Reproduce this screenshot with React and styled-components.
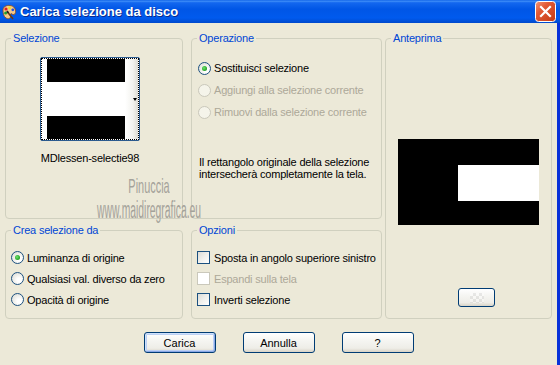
import React from "react";
import styled, { createGlobalStyle } from "styled-components";

const GlobalStyle = createGlobalStyle`
  html, body {
    margin: 0;
    padding: 0;
    background: #ece9d8;
  }
  body {
    font-family: "Liberation Sans", Arial, sans-serif;
    font-size: 11px;
    color: #000;
  }
`;

const Window = styled.div`
  width: 560px;
  height: 365px;
  display: flex;
  flex-direction: column;
  overflow: hidden;
  background: #ece9d8;
`;

const TitleBar = styled.div`
  height: 23px;
  flex: none;
  display: flex;
  align-items: center;
  padding: 0 4px 0 1px;
  box-sizing: border-box;
  background: linear-gradient(
    to bottom,
    #0a5ee6 0%,
    #3f8ef8 5%,
    #1367ef 12%,
    #0056e6 40%,
    #005aee 78%,
    #0049cc 100%
  );
`;

const Title = styled.div`
  flex: 1;
  margin-left: 3px;
  color: #fff;
  font-weight: bold;
  font-size: 13px;
  letter-spacing: 0;
  text-shadow: 1px 1px 0 #0a2a8c;
`;

const Client = styled.div`
  flex: 1;
  position: relative;
  border-right: 3px solid #0831d9;
`;

const Panels = styled.div`
  display: grid;
  grid-template-columns: 186px 194px 167px;
  grid-template-rows: 187px 95px;
  row-gap: 5px;
  margin: 9px 0 0 5px;
`;

const Group = styled.fieldset`
  grid-column: ${(p) => p.$col};
  grid-row: ${(p) => p.$row};
  width: ${(p) => p.$w}px;
  margin: 0;
  padding: 0;
  min-width: 0;
  box-sizing: border-box;
  border: 1px solid #d0d0bf;
  border-radius: 4px;
`;

const Legend = styled.legend`
  color: #0046d5;
  padding: 0 2px;
  margin-left: 5px;
  line-height: 13px;
  font-size: 11px;
  letter-spacing: -0.2px;
`;

const Content = styled.div`
  display: flex;
  flex-direction: column;
  align-items: ${(p) => p.$align || "flex-start"};
  padding: ${(p) => p.$pad};
`;

const Thumb = styled.div`
  width: 100px;
  height: 84px;
  box-sizing: border-box;
  border: 1px solid #2b5a8e;
  border-radius: 2px;
  background: #fff;
`;

const Focus = styled.div`
  height: 100%;
  box-sizing: border-box;
  border: 1px dotted #000;
  display: flex;
  padding-left: 5px;
`;

const ThumbImage = styled.div`
  width: 78px;
  display: flex;
  flex-direction: column;
  justify-content: space-between;
`;

const Bar = styled.div`
  height: ${(p) => p.$h}px;
  background: #000;
`;

const Strip = styled.div`
  flex: 1;
  display: flex;
  align-items: center;
  justify-content: flex-end;
  padding-right: 1px;
  background: linear-gradient(to right, #ffffff, #f3f3ef 60%, #dedcd3);
`;

const Arrow = styled.span`
  width: 0;
  height: 0;
  border-left: 2.5px solid transparent;
  border-right: 2.5px solid transparent;
  border-top: 3px solid #000;
`;

const Caption = styled.div`
  width: 100px;
  margin-top: 11px;
  text-align: center;
  line-height: 13px;
  letter-spacing: -0.2px;
`;

const Choice = styled.label`
  height: ${(p) => p.$h || 21}px;
  display: flex;
  align-items: center;
  white-space: nowrap;
  letter-spacing: -0.2px;
  color: ${(p) => (p.$disabled ? "#aca899" : "#000")};
`;

const Radio = styled.span`
  width: 13px;
  height: 13px;
  flex: none;
  box-sizing: border-box;
  margin-right: ${(p) => p.$gap || 3}px;
  border-radius: 50%;
  border: 1px solid ${(p) => (p.$disabled ? "#cac8bb" : "#1c5180")};
  background: ${(p) =>
    p.$disabled
      ? "#f5f4ea"
      : "radial-gradient(circle at 65% 65%, #ffffff 20%, #e6e6e0 70%, #d2d2ca 100%)"};
  display: flex;
  align-items: center;
  justify-content: center;

  &::after {
    content: "";
    display: ${(p) => (p.$checked ? "block" : "none")};
    width: 5px;
    height: 5px;
    border-radius: 50%;
    background: radial-gradient(circle at 40% 40%, #6fe46f, #1d9a1d 75%);
  }
`;

const Check = styled.span`
  width: 13px;
  height: 13px;
  flex: none;
  box-sizing: border-box;
  margin-right: 4px;
  border: 1px solid ${(p) => (p.$disabled ? "#cac8bb" : "#1c5180")};
  background: ${(p) =>
    p.$disabled
      ? "#ffffff"
      : "linear-gradient(135deg, #dcdcd7 0%, #f0f0ec 50%, #ffffff 100%)"};
`;

const Note = styled.p`
  margin: 33px 0 0 1px;
  line-height: 12px;
  letter-spacing: -0.2px;
`;

const Preview = styled.div`
  width: 141px;
  height: 86px;
  box-sizing: border-box;
  padding-top: 26px;
  display: flex;
  justify-content: flex-end;
  align-items: flex-start;
  background: #000;
`;

const PreviewHole = styled.div`
  width: 81px;
  height: 36px;
  background: #fff;
`;

const Button = styled.button`
  width: ${(p) => p.$w || 72}px;
  height: ${(p) => p.$h || 21}px;
  box-sizing: border-box;
  padding: 0;
  margin: 0;
  font-family: "Liberation Sans", Arial, sans-serif;
  font-size: 11px;
  color: #000;
  border: 1px solid #003c74;
  border-radius: 3px;
  background: linear-gradient(
    to bottom,
    #ffffff 0%,
    #f6f6f3 35%,
    #eeede7 80%,
    #d8d3c6 100%
  );
  box-shadow: ${(p) =>
    p.$default
      ? "inset 1px 1px 0 #cee1fb, inset -1px -1px 0 #8aa8e6, inset 0 0 0 2px #bcd0f4"
      : "none"};
  display: flex;
  align-items: center;
  justify-content: center;
`;

const PreviewButton = styled(Button)`
  margin: 63px 0 0 72px;
  align-self: flex-start;
`;

const Checker = styled.span`
  width: 14px;
  height: 10px;
  opacity: 0.35;
  background: repeating-conic-gradient(#c8c8c8 0% 25%, #ffffff 0% 50%) 0 0 / 6px 6px;
`;

const ButtonRow = styled.div`
  display: flex;
  justify-content: center;
  gap: 27px;
  margin-top: 13px;
`;

const Watermark = styled.div`
  position: absolute;
  left: 149px;
  top: 152px;
  transform: translateX(-50%);
  display: flex;
  flex-direction: column;
  align-items: center;
  pointer-events: none;
`;

const Mark = styled.div`
  font-family: "Liberation Sans", Arial, sans-serif;
  font-size: ${(p) => p.$size}px;
  line-height: 1;
  white-space: nowrap;
  color: #a4a29a;
  margin-top: ${(p) => p.$mt || 0}px;
  transform: scaleX(${(p) => p.$scale});
`;

function AppIcon() {
  return (
    <svg width="16" height="16" viewBox="0 0 16 16">
      <path
        d="M2 6 C2 2.5 6 1 9 1.5 C13 2 15 5 14.5 8.5 C14 11 12 11 11 10 C10 9 9 10 9.5 12 C10 14.5 7 15.5 5 14 C2.5 12.5 2 9 2 6 Z"
        fill="#f5c98a"
        stroke="#8a4a1a"
        strokeWidth="0.8"
      />
      <circle cx="5" cy="5" r="1.6" fill="#e02020" />
      <circle cx="8.6" cy="3.9" r="1.4" fill="#f0e020" />
      <circle cx="11.8" cy="5.8" r="1.4" fill="#2050e0" />
      <circle cx="4.6" cy="9" r="1.5" fill="#20a030" />
      <path d="M12 15 L7 8.5" stroke="#6a3a10" strokeWidth="1.6" />
      <path d="M7.4 9 L6 7" stroke="#202020" strokeWidth="1.8" />
    </svg>
  );
}

function CloseButton() {
  return (
    <svg width="21" height="21" viewBox="0 0 21 21">
      <defs>
        <linearGradient id="closeFill" x1="0" y1="0" x2="1" y2="1">
          <stop offset="0" stopColor="#f2977a" />
          <stop offset="0.35" stopColor="#e25a36" />
          <stop offset="1" stopColor="#c23a14" />
        </linearGradient>
      </defs>
      <rect x="0.5" y="0.5" width="20" height="20" rx="3" fill="url(#closeFill)" stroke="#ffffff" />
      <path d="M6 6 L15 15 M15 6 L6 15" stroke="#ffffff" strokeWidth="2.2" strokeLinecap="square" />
    </svg>
  );
}

export default function App() {
  return (
    <>
      <GlobalStyle />
      <Window>
        <TitleBar>
          <AppIcon />
          <Title>Carica selezione da disco</Title>
          <CloseButton />
        </TitleBar>
        <Client>
          <Panels>
            <Group $col={1} $row={1} $w={178}>
              <Legend>Selezione</Legend>
              <Content $pad="12px 0 0 34px">
                <Thumb>
                  <Focus>
                    <ThumbImage>
                      <Bar $h={23} />
                      <Bar $h={23} />
                    </ThumbImage>
                    <Strip>
                      <Arrow />
                    </Strip>
                  </Focus>
                </Thumb>
                <Caption>MDlessen-selectie98</Caption>
              </Content>
            </Group>

            <Group $col={2} $row={1} $w={191}>
              <Legend>Operazione</Legend>
              <Content $pad="12px 0 0 6px">
                <Choice $h={22}>
                  <Radio $checked $gap={3} />
                  Sostituisci selezione
                </Choice>
                <Choice $h={22} $disabled>
                  <Radio $disabled $gap={3} />
                  Aggiungi alla selezione corrente
                </Choice>
                <Choice $h={22} $disabled>
                  <Radio $disabled $gap={3} />
                  Rimuovi dalla selezione corrente
                </Choice>
                <Note>
                  Il rettangolo originale della selezione
                  <br />
                  intersecherà completamente la tela.
                </Note>
              </Content>
            </Group>

            <Group $col={3} $row="1 / 3" $w={167}>
              <Legend>Anteprima</Legend>
              <Content $pad="94px 0 0 0" $align="center">
                <Preview>
                  <PreviewHole />
                </Preview>
                <PreviewButton $w={37} $h={19}>
                  <Checker />
                </PreviewButton>
              </Content>
            </Group>

            <Group $col={1} $row={2} $w={178}>
              <Legend>Crea selezione da</Legend>
              <Content $pad="10px 0 0 5px">
                <Choice>
                  <Radio $checked />
                  Luminanza di origine
                </Choice>
                <Choice>
                  <Radio />
                  Qualsiasi val. diverso da zero
                </Choice>
                <Choice>
                  <Radio />
                  Opacità di origine
                </Choice>
              </Content>
            </Group>

            <Group $col={2} $row={2} $w={191}>
              <Legend>Opzioni</Legend>
              <Content $pad="10px 0 0 5px">
                <Choice>
                  <Check />
                  Sposta in angolo superiore sinistro
                </Choice>
                <Choice $disabled>
                  <Check $disabled />
                  Espandi sulla tela
                </Choice>
                <Choice>
                  <Check />
                  Inverti selezione
                </Choice>
              </Content>
            </Group>
          </Panels>

          <ButtonRow>
            <Button $default>Carica</Button>
            <Button>Annulla</Button>
            <Button>?</Button>
          </ButtonRow>

          <Watermark>
            <Mark $size={21} $scale={0.52}>Pinuccia</Mark>
            <Mark $size={23} $scale={0.45} $mt={3}>www.maidiregrafica.eu</Mark>
          </Watermark>
        </Client>
      </Window>
    </>
  );
}
